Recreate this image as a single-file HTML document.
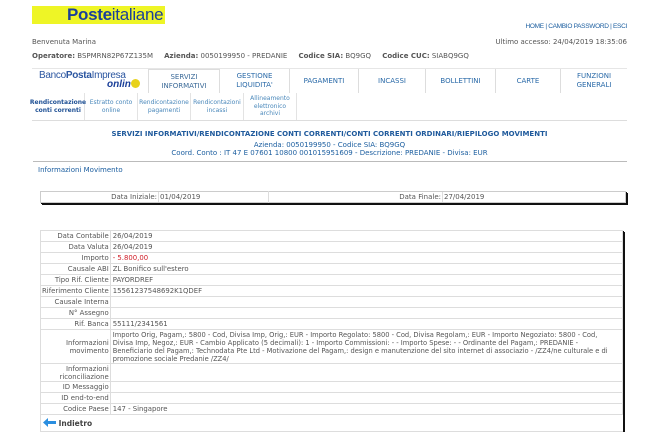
<!DOCTYPE html>
<html><head><meta charset="utf-8"><style>
*{margin:0;padding:0;box-sizing:border-box}
body{width:659px;height:445px;background:#fff;font-family:"DejaVu Sans",Verdana,sans-serif;font-size:7px;color:#555;position:relative;overflow:hidden}
.a{position:absolute;white-space:nowrap}
.blue{color:#1d5fa0}
.tab{position:absolute;top:69px;height:24px;border-left:1px solid #ddd;color:#2a6aa8;font-size:7px;text-align:center;display:flex;align-items:center;justify-content:center;line-height:9px}
.sub{position:absolute;top:93px;height:27px;border-right:1px solid #e3e3e3;color:#4a88bb;font-size:6px;text-align:center;display:flex;align-items:center;justify-content:center;line-height:7.5px}
table{border-collapse:collapse}
td{border:1px solid #ddd;font-size:6.9px;padding:0 2px;color:#555;vertical-align:middle}
td.l{text-align:right;width:68px;padding:0 1px}
</style></head><body>
<div class="a" style="left:32px;top:6px;width:133px;height:18px;background:#eef526"></div>
<div class="a" style="left:67px;top:5px;font-family:'Liberation Sans',sans-serif;font-size:17px;color:#1a3f99;letter-spacing:-0.3px"><b>Poste</b>italiane</div>
<div class="a blue" style="right:32px;top:23px;font-family:'Liberation Sans',sans-serif;font-size:6.5px;letter-spacing:-0.3px">HOME | CAMBIO PASSWORD | ESCI</div>
<div class="a" style="left:32px;top:38px">Benvenuta Marina</div>
<div class="a" style="right:32px;top:38px">Ultimo accesso: 24/04/2019 18:35:06</div>
<div class="a" style="left:32px;top:52px"><b>Operatore:</b> BSPMRN82P67Z135M &nbsp;&nbsp;&nbsp;&nbsp;<b>Azienda:</b> 0050199950 - PREDANIE &nbsp;&nbsp;&nbsp;&nbsp;<b>Codice SIA:</b> BQ9GQ &nbsp;&nbsp;&nbsp;&nbsp;<b>Codice CUC:</b> SIABQ9GQ</div>
<div class="a" style="left:32px;top:68px;width:595px;border-top:1px solid #e6e6e6"></div>
<div class="a" style="left:39px;top:70px;font-family:'Liberation Sans',sans-serif;font-size:10px;color:#2a55a0;letter-spacing:-0.3px">Banco<b>Posta</b>Impresa</div>
<div class="a" style="left:107px;top:79px;font-family:'Liberation Sans',sans-serif;font-size:10px;color:#1a3f99;font-style:italic;font-weight:bold">onlin<span style="display:inline-block;width:9px;height:9px;border-radius:50%;background:#e8d21c;vertical-align:-1px"></span></div>
<div class="tab" style="left:148px;width:72px;border-top:1px solid #ddd;border-right:1px solid #ddd;background:#fff;color:#3b6a98">SERVIZI<br>INFORMATIVI</div>
<div class="tab" style="left:220px;width:69px;border-left:none">GESTIONE<br>LIQUIDITA'</div>
<div class="tab" style="left:289px;width:69px">PAGAMENTI</div>
<div class="tab" style="left:358px;width:67px">INCASSI</div>
<div class="tab" style="left:425px;width:70px">BOLLETTINI</div>
<div class="tab" style="left:495px;width:65px">CARTE</div>
<div class="tab" style="left:560px;width:67px">FUNZIONI<br>GENERALI</div>
<div class="sub" style="left:32px;width:53px;color:#1d4f94;font-weight:bold">Rendicontazione<br>conti correnti</div>
<div class="sub" style="left:85px;width:53px">Estratto conto<br>online</div>
<div class="sub" style="left:138px;width:53px">Rendicontazione<br>pagamenti</div>
<div class="sub" style="left:191px;width:53px">Rendicontazioni<br>incassi</div>
<div class="sub" style="left:244px;width:53px">Allineamento<br>elettronico<br>archivi</div>
<div class="a" style="left:32px;top:120px;width:595px;border-top:1px solid #ddd"></div>
<div class="a blue" style="left:0;width:659px;text-align:center;top:130px;font-weight:bold;font-size:7px;color:#1f5a9c">SERVIZI INFORMATIVI/RENDICONTAZIONE CONTI CORRENTI/CONTI CORRENTI ORDINARI/RIEPILOGO MOVIMENTI</div>
<div class="a blue" style="left:0;width:659px;text-align:center;top:141px">Azienda: 0050199950 - Codice SIA: BQ9GQ</div>
<div class="a blue" style="left:0;width:659px;text-align:center;top:149px">Coord. Conto : IT 47 E 07601 10800 001015951609 - Descrizione: PREDANIE - Divisa: EUR</div>
<div class="a" style="left:33px;top:161px;width:594px;border-top:1px solid #bbb"></div>
<div class="a blue" style="left:38px;top:166px">Informazioni Movimento</div>
<div class="a" style="left:40px;top:191px;width:586px;height:12px;border:1px solid #ccc;box-shadow:1px 1px 0 #111,2px 2px 0 #111"></div>
<div class="a" style="left:268px;top:191px;height:12px;border-left:1px solid #ddd"></div>
<div class="a" style="left:40px;width:117px;top:193px;text-align:right">Data Iniziale:</div>
<div class="a" style="left:158px;top:192px;border-left:1px solid #ddd;padding-left:1px;height:10px;padding-top:1px">01/04/2019</div>
<div class="a" style="left:268px;width:173px;top:193px;text-align:right">Data Finale:</div>
<div class="a" style="left:442px;top:192px;border-left:1px solid #ddd;padding-left:1px;height:10px;padding-top:1px">27/04/2019</div>
<div class="a" style="left:40px;top:230px;width:583px;height:200px;box-shadow:1px 1px 0 #111,2px 2px 0 #111"></div>
<table class="a" style="left:40px;top:230px;width:583px;background:#fff">
<tr style="height:11px"><td class="l">Data Contabile</td><td>26/04/2019</td></tr>
<tr style="height:11px"><td class="l">Data Valuta</td><td>26/04/2019</td></tr>
<tr style="height:11px"><td class="l">Importo</td><td style="color:#d0202a">- 5.800,00</td></tr>
<tr style="height:11px"><td class="l">Causale ABI</td><td>ZL Bonifico sull'estero</td></tr>
<tr style="height:11px"><td class="l">Tipo Rif. Cliente</td><td>PAYORDREF</td></tr>
<tr style="height:11px"><td class="l">Riferimento Cliente</td><td>15561237548692K1QDEF</td></tr>
<tr style="height:11px"><td class="l">Causale Interna</td><td></td></tr>
<tr style="height:11px"><td class="l">N° Assegno</td><td></td></tr>
<tr style="height:11px"><td class="l">Rif. Banca</td><td>55111/2341561</td></tr>
<tr style="height:34px"><td class="l">Informazioni<br>movimento</td><td style="line-height:8px;white-space:normal;font-size:6.7px">Importo Orig, Pagam,: 5800 - Cod, Divisa Imp, Orig,: EUR - Importo Regolato: 5800 - Cod, Divisa Regolam,: EUR - Importo Negoziato: 5800 - Cod,<br>Divisa Imp, Negoz,: EUR - Cambio Applicato (5 decimali): 1 - Importo Commissioni: - - Importo Spese: - - Ordinante del Pagam,: PREDANIE -<br>Beneficiario del Pagam,: Technodata Pte Ltd - Motivazione del Pagam,: design e manutenzione del sito internet di associazio - /ZZ4/ne culturale e di<br>promozione sociale Predanie /ZZ4/</td></tr>
<tr style="height:18px"><td class="l" style="line-height:8px">Informazioni<br>riconciliazione</td><td></td></tr>
<tr style="height:11px"><td class="l">ID Messaggio</td><td></td></tr>
<tr style="height:11px"><td class="l">ID end-to-end</td><td></td></tr>
<tr style="height:11px"><td class="l">Codice Paese</td><td>147 - Singapore</td></tr>
<tr style="height:17px"><td colspan="2" style="border-right:none;font-weight:bold;font-size:7.5px;color:#444"><svg width="13" height="9" viewBox="0 0 13 9" style="vertical-align:-1px"><path d="M0 4.5L5 0V3H13V6H5V9Z" fill="#2a8ee0"/></svg> Indietro</td></tr>
</table>
</body></html>
